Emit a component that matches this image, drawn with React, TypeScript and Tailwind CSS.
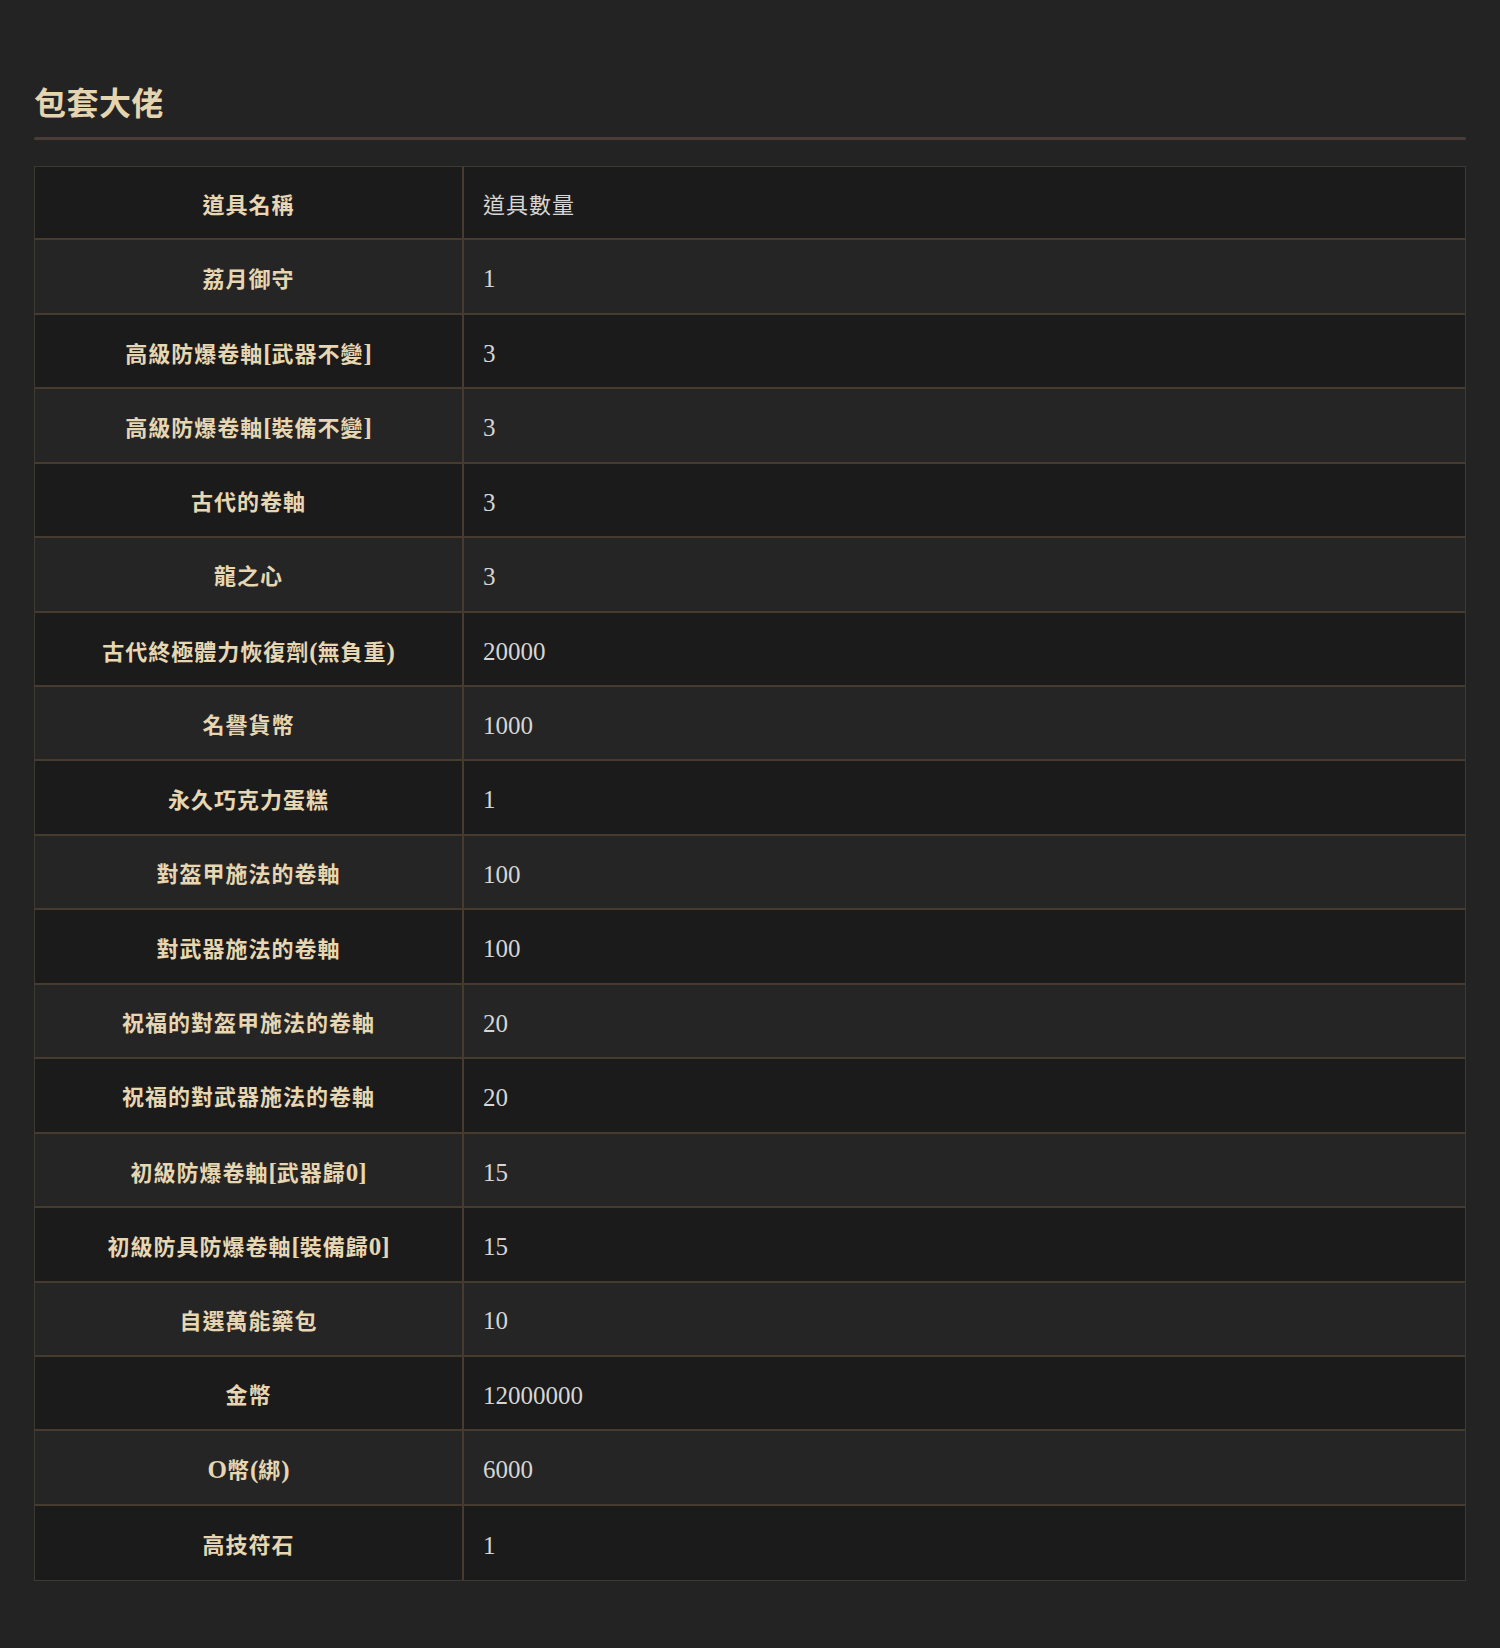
import React from "react";

const rows: [string, string][] = [
  ["荔月御守", "1"],
  ["高級防爆卷軸[武器不變]", "3"],
  ["高級防爆卷軸[裝備不變]", "3"],
  ["古代的卷軸", "3"],
  ["龍之心", "3"],
  ["古代終極體力恢復劑(無負重)", "20000"],
  ["名譽貨幣", "1000"],
  ["永久巧克力蛋糕", "1"],
  ["對盔甲施法的卷軸", "100"],
  ["對武器施法的卷軸", "100"],
  ["祝福的對盔甲施法的卷軸", "20"],
  ["祝福的對武器施法的卷軸", "20"],
  ["初級防爆卷軸[武器歸0]", "15"],
  ["初級防具防爆卷軸[裝備歸0]", "15"],
  ["自選萬能藥包", "10"],
  ["金幣", "12000000"],
  ["O幣(綁)", "6000"],
  ["高技符石", "1"],
];

function Mixed({ text }: { text: string }) {
  const parts = text.match(/[\x00-\x7F]+|[^\x00-\x7F]+/g) || [];
  return (
    <>
      {parts.map((p, i) =>
        /^[\x00-\x7F]+$/.test(p) ? (
          <span key={i} className="text-[25px] tracking-normal">
            {p}
          </span>
        ) : (
          <span key={i}>{p}</span>
        )
      )}
    </>
  );
}

export default function App() {
  const font = { fontFamily: '"Liberation Serif", "Noto Sans CJK TC", serif' };
  return (
    <div className="min-h-[1648px] w-full bg-[#232323] px-[34px] pt-[84px] pb-[69px]" style={font}>
      <h2 className="text-[32px] leading-[40px] font-bold text-[#e4d4b0] tracking-[0.5px]">包套大佬</h2>
      <div className="mt-[13px] h-[3px] rounded-full bg-[#4a3d39]" />
      <div className="mt-[26px] border border-[#3d3a36]">
        <div className="grid grid-cols-[429px_1fr] h-[73.4px] bg-[#1b1b1b] border-b-2 border-[#463b2e]">
          <div className="flex items-center justify-center pt-[5px] border-r-2 border-[#463b2e] text-[22px] font-bold text-[#e6d6b2] tracking-[1px]">
            道具名稱
          </div>
          <div className="flex items-center pt-[5px] pl-[19px] text-[22px] text-[#d6d6d6] tracking-[1px]">道具數量</div>
        </div>
        {rows.map(([name, qty], i) => (
          <div
            key={i}
            className={
              "grid grid-cols-[429px_1fr] h-[74.45px] " +
              (i % 2 === 0 ? "bg-[#252525] " : "bg-[#1b1b1b] ") +
              (i < rows.length - 1 ? "border-b-2 border-[#463b2e]" : "")
            }
          >
            <div className="flex items-center justify-center pt-[5px] border-r-2 border-[#463b2e] text-[22px] font-bold text-[#e6d6b2] tracking-[1px]">
              <span>
                <Mixed text={name} />
              </span>
            </div>
            <div className="flex items-center pt-[5px] pl-[19px] text-[25px] text-[#d6d6d6]">{qty}</div>
          </div>
        ))}
      </div>
    </div>
  );
}
